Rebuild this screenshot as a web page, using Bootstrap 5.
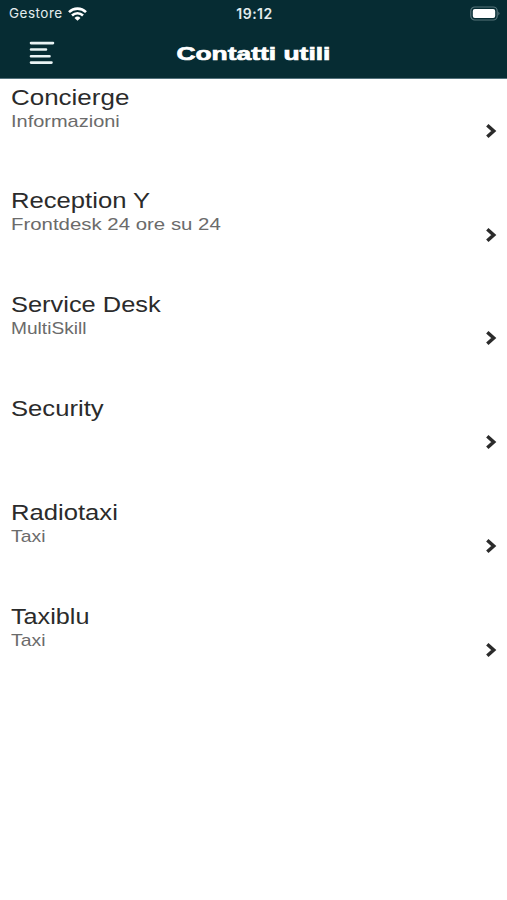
<!DOCTYPE html>
<html lang="it">
<head>
<meta charset="utf-8">
<meta name="viewport" content="width=device-width, initial-scale=1">
<title>Contatti utili</title>
<link href="https://cdn.jsdelivr.net/npm/bootstrap@5.3.0/dist/css/bootstrap.min.css" rel="stylesheet">
<style>
  body { font-family: "Liberation Sans", Arial, sans-serif; background: #fff; }
  .topbar { height: 79px; background: #062c33; border-bottom: 1px solid #53717b; color: #fff; }
  .status { height: 27px; padding: 0 7px 0 9px; font-family: Inter, sans-serif; color: #e3ecee; }
  .carrier { font-size: 13.5px; letter-spacing: .5px; gap: 5px; }
  .clock { font-size: 14px; font-weight: 600; letter-spacing: .5px; }
  .titlebar { height: 51px; padding: 0 29px; }
  .wide { display: inline-block; white-space: nowrap; transform: scaleX(var(--w, 1.165)); transform-origin: left; }
  .page-title { --w: 1.39; font-size: 19px; font-weight: 700; transform-origin: center; -webkit-text-stroke: .7px #fff; line-height: 24px; padding-top: 2px; }
  .contact { height: 103.85px; padding: 5.6px 10.5px 0 10.6px; color: #2b2b2b; }
  .contact-name { font-size: 22px; line-height: 25px; }
  .contact-note { font-size: 17px; line-height: 24px; color: #6b6b6b; }
  .concierge { --w: 1.18; } .informazioni { --w: 1.175; }
  .frontdesk { --w: 1.2; } .service { --w: 1.155; }
  .multiskill { --w: 1.125; } .taxiblu { --w: 1.145; } .taxi { --w: 1.14; }
  .chevron { margin-top: -6px; }
</style>
<script src="https://cdn.jsdelivr.net/npm/bootstrap@5.3.0/dist/js/bootstrap.bundle.min.js"></script>
</head>
<body>
<svg class="d-none">
  <symbol id="chev" viewBox="0 0 12 16"><path d="M2.300 2.300 8.700 8l-6.400 5.700" fill="none" stroke="#2b2b2b" stroke-width="3.500"/></symbol>
</svg>
<header class="topbar">
  <div class="status row g-0 align-items-center">
    <div class="col d-flex align-items-center carrier"><span>Gestore</span>
      <svg width="19" height="14" viewBox="0 0 19 14" fill="none" stroke="#fff" stroke-width="2.6"><path d="M1 5.1a12.2 12.2 0 0 1 17 0M4 8.500a7.9 7.9 0 0 1 11 0"/><path d="M9.5 13.7 6.5 10.900a4.3 4.3 0 0 1 6 0Z" fill="#fff" stroke="none"/></svg>
    </div>
    <div class="col-auto clock">19:12</div>
    <div class="col d-flex justify-content-end">
      <svg width="30" height="15" viewBox="0 0 30 15"><rect x=".8" y="1" width="26.4" height="13" rx="4" fill="none" stroke="#57747a" stroke-width="1.2"/><rect x="2.8" y="3" width="22.4" height="9" rx="2" fill="#fff"/><path d="M28.3 5.5q2.4 2 0 4z" fill="#57747a"/></svg>
    </div>
  </div>
  <nav class="titlebar row g-0 align-items-center">
    <div class="col d-flex"><svg width="26" height="24" viewBox="0 0 26 24" stroke="#e9f3f4" stroke-width="2.6" stroke-linecap="round"><path d="M2 2.1h22M2 8.5h15M2 15.2h18.500M2 21.600h20.500"/></svg></div>
    <h1 class="col-auto wide page-title mb-0">Contatti utili</h1>
    <div class="col"></div>
  </nav>
</header>
<main>
  <ul class="list-unstyled mb-0">
    <li class="contact d-flex justify-content-between">
      <div class="d-flex flex-column align-items-start"><span class="wide contact-name concierge">Concierge</span><span class="wide contact-note informazioni">Informazioni</span></div>
      <svg class="chevron align-self-center" width="12" height="16"><use href="#chev"/></svg></li>
    <li class="contact d-flex justify-content-between">
      <div class="d-flex flex-column align-items-start"><span class="wide contact-name">Reception Y</span><span class="wide contact-note frontdesk">Frontdesk 24 ore su 24</span></div>
      <svg class="chevron align-self-center" width="12" height="16"><use href="#chev"/></svg></li>
    <li class="contact d-flex justify-content-between">
      <div class="d-flex flex-column align-items-start"><span class="wide contact-name service">Service Desk</span><span class="wide contact-note multiskill">MultiSkill</span></div>
      <svg class="chevron align-self-center" width="12" height="16"><use href="#chev"/></svg></li>
    <li class="contact d-flex justify-content-between">
      <div class="d-flex flex-column align-items-start"><span class="wide contact-name">Security</span></div>
      <svg class="chevron align-self-center" width="12" height="16"><use href="#chev"/></svg></li>
    <li class="contact d-flex justify-content-between">
      <div class="d-flex flex-column align-items-start"><span class="wide contact-name">Radiotaxi</span><span class="wide contact-note taxi">Taxi</span></div>
      <svg class="chevron align-self-center" width="12" height="16"><use href="#chev"/></svg></li>
    <li class="contact d-flex justify-content-between">
      <div class="d-flex flex-column align-items-start"><span class="wide contact-name taxiblu">Taxiblu</span><span class="wide contact-note taxi">Taxi</span></div>
      <svg class="chevron align-self-center" width="12" height="16"><use href="#chev"/></svg></li>
  </ul>
</main>
</body>
</html>
